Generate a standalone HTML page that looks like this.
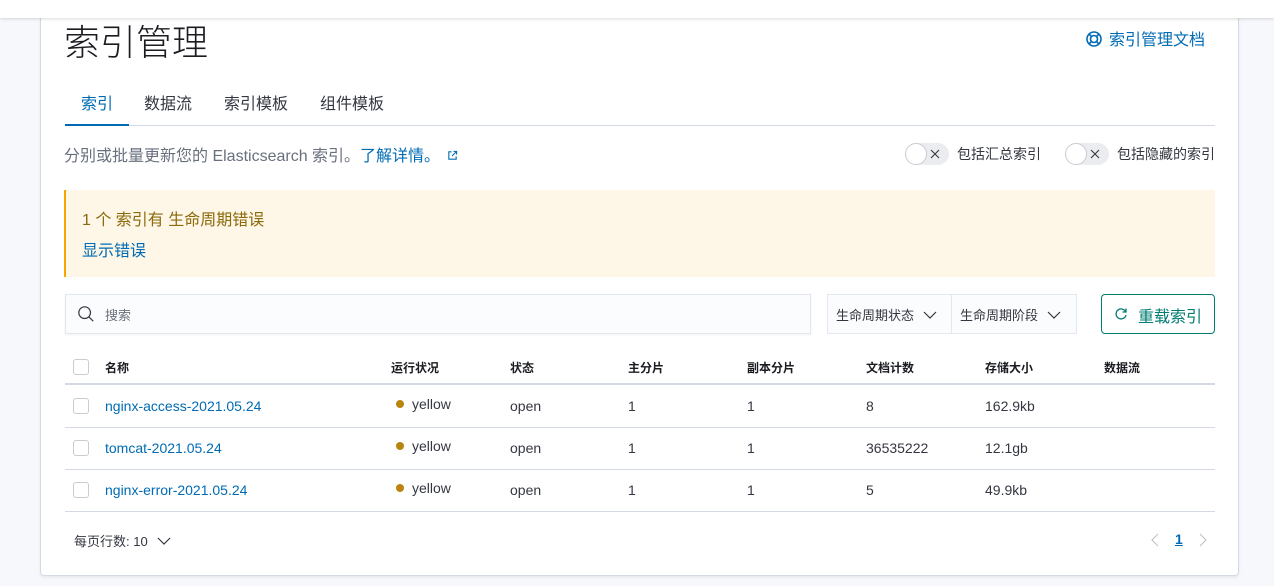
<!DOCTYPE html>
<html><head><meta charset="utf-8"><style>
*{box-sizing:border-box;margin:0;padding:0}
body{width:1274px;height:586px;overflow:hidden;background:#f7f8fc;font-family:"Liberation Sans","Noto Sans CJK SC",sans-serif;color:#343741;position:relative;font-size:14px}
.top{position:absolute;left:0;top:0;width:1274px;height:18px;background:#fff;box-shadow:0 1px 3px rgba(0,0,0,.15);z-index:2}
.panel{position:absolute;left:40px;top:-10px;width:1199px;height:586px;background:#fff;border:1px solid #d3dae6;border-radius:4px;box-shadow:0 2px 3px rgba(0,0,0,.06)}
.a{position:absolute;white-space:nowrap}
.blue{color:#006bb4 !important}
.tog{position:absolute;width:44px;height:22px;border-radius:11px;background:#eaecf0}
.tog i{position:absolute;left:0;top:0;width:22px;height:22px;border-radius:50%;background:#fff;border:1px solid #c9ccd3}
.tog svg{position:absolute;left:25px;top:6px}
.th{position:absolute;top:359px;font-size:12px;font-weight:bold;color:#1a1c21}
.cb{position:absolute;left:73px;width:16px;height:16px;border:1px solid #c9ccd3;border-radius:3px;background:#fff}
.hl{position:absolute;left:65px;width:1150px;height:1px;background:#d3dae6}
.td{position:absolute;font-size:14px;color:#343741}
.dot{display:inline-block;width:8px;height:8px;border-radius:50%;background:#b9850f;margin-right:8px;vertical-align:1px}
</style></head><body>
<div class="top"></div>
<div class="panel"></div>
<div class="a" style="left:64px;top:14px;font-size:36px;color:#1a1c21;font-weight:300">索引管理</div>
<div class="a blue" style="left:1085px;top:26px;font-size:16px"><svg width="18" height="18" viewBox="0 0 18 18" style="vertical-align:-3px;margin-right:6px"><circle cx="9" cy="9" r="7" fill="none" stroke="#006bb4" stroke-width="1.6"/><circle cx="9" cy="9" r="3.5" fill="none" stroke="#006bb4" stroke-width="1.6"/><path d="M4 4l2.5 2.5M14 4l-2.5 2.5M4 14l2.5-2.5M14 14l-2.5-2.5" stroke="#006bb4" stroke-width="1.6"/></svg>索引管理文档</div>
<div class="a blue" style="left:81px;top:90px;font-size:16px">索引</div>
<div class="a" style="left:144px;top:90px;font-size:16px">数据流</div>
<div class="a" style="left:224px;top:90px;font-size:16px">索引模板</div>
<div class="a" style="left:320px;top:90px;font-size:16px">组件模板</div>
<div style="position:absolute;left:65px;top:125px;width:1150px;height:1px;background:#d3dae6"></div>
<div style="position:absolute;left:65px;top:124px;width:64px;height:2px;background:#006bb4"></div>
<div class="a" style="left:64px;top:142px;color:#69707d;font-size:16px">分别或批量更新您的 Elasticsearch 索引。<span class="blue">了解详情。</span> <svg width="11" height="11" viewBox="0 0 12 12" style="margin-left:2px"><path d="M5 2H2v8h8V7M7 1.5h3.5V5M10.5 1.5L5.5 6.5" fill="none" stroke="#006bb4" stroke-width="1.2"/></svg></div>
<div class="tog" style="left:905px;top:143px"><i></i><svg width="10" height="10"><path d="M1 1l8 8M9 1L1 9" stroke="#343741" stroke-width="1.1"/></svg></div>
<div class="a" style="left:957px;top:144px">包括汇总索引</div>
<div class="tog" style="left:1065px;top:143px"><i></i><svg width="10" height="10"><path d="M1 1l8 8M9 1L1 9" stroke="#343741" stroke-width="1.1"/></svg></div>
<div class="a" style="left:1117px;top:144px">包括隐藏的索引</div>
<div style="position:absolute;left:64px;top:190px;width:1151px;height:87px;background:#fef6e6;border-left:2px solid #f5a700"></div>
<div class="a" style="left:82px;top:206px;font-size:16px;color:#8a6a0a">1 个 索引有 生命周期错误</div>
<div class="a blue" style="left:82px;top:237px;font-size:16px">显示错误</div>
<div style="position:absolute;left:65px;top:294px;width:746px;height:40px;background:#fbfcfd;border:1px solid #e3e8f0;box-shadow:0 1px 2px rgba(0,0,0,.06)"></div>
<svg style="position:absolute;left:77px;top:305px" width="18" height="18" viewBox="0 0 20 20"><circle cx="8.5" cy="8.5" r="6.5" fill="none" stroke="#343741" stroke-width="1.3"/><path d="M13 13l5 5" stroke="#343741" stroke-width="1.3"/></svg>
<div class="a" style="left:105px;top:305px;font-size:13px;color:#69707d">搜索</div>
<div style="position:absolute;left:827px;top:294px;width:250px;height:40px;background:#fbfcfd;border:1px solid #e3e8f0"></div>
<div style="position:absolute;left:951px;top:294px;width:1px;height:40px;background:#e3e8f0"></div>
<div class="a" style="left:836px;top:305px;font-size:13px">生命周期状态 <svg width="14" height="10" style="margin-left:5px"><path d="M1 2l6 6 6-6" fill="none" stroke="#343741" stroke-width="1.2"/></svg></div>
<div class="a" style="left:960px;top:305px;font-size:13px">生命周期阶段 <svg width="14" height="10" style="margin-left:5px"><path d="M1 2l6 6 6-6" fill="none" stroke="#343741" stroke-width="1.2"/></svg></div>
<div style="position:absolute;left:1101px;top:294px;width:114px;height:40px;border:1px solid #017d73;border-radius:4px"></div>
<svg style="position:absolute;left:1114px;top:307px" width="14" height="14" viewBox="0 0 14 14"><path d="M11.5 4.5A5 5 0 1 0 12 8" fill="none" stroke="#017d73" stroke-width="1.3"/><path d="M12 1.5v3.5H8.5" fill="none" stroke="#017d73" stroke-width="1.3"/></svg>
<div class="a" style="left:1138px;top:303px;font-size:16px;color:#017d73">重载索引</div>
<div class="cb" style="top:359px"></div>
<div class="th" style="left:105px">名称</div><div class="th" style="left:391px">运行状况</div><div class="th" style="left:510px">状态</div><div class="th" style="left:628px">主分片</div><div class="th" style="left:747px">副本分片</div><div class="th" style="left:866px">文档计数</div><div class="th" style="left:985px">存储大小</div><div class="th" style="left:1104px">数据流</div>
<div class="hl" style="top:383px;height:2px"></div>
<div class="cb" style="top:398px"></div>
<div class="td blue" style="left:105px;top:398px">nginx-access-2021.05.24</div><div class="td" style="left:396px;top:396px"><span class="dot"></span>yellow</div><div class="td" style="left:510px;top:398px">open</div><div class="td" style="left:628px;top:398px">1</div><div class="td" style="left:747px;top:398px">1</div><div class="td" style="left:866px;top:398px">8</div><div class="td" style="left:985px;top:398px">162.9kb</div>
<div class="hl" style="top:427px"></div>
<div class="cb" style="top:440px"></div>
<div class="td blue" style="left:105px;top:440px">tomcat-2021.05.24</div><div class="td" style="left:396px;top:438px"><span class="dot"></span>yellow</div><div class="td" style="left:510px;top:440px">open</div><div class="td" style="left:628px;top:440px">1</div><div class="td" style="left:747px;top:440px">1</div><div class="td" style="left:866px;top:440px">36535222</div><div class="td" style="left:985px;top:440px">12.1gb</div>
<div class="hl" style="top:469px"></div>
<div class="cb" style="top:482px"></div>
<div class="td blue" style="left:105px;top:482px">nginx-error-2021.05.24</div><div class="td" style="left:396px;top:480px"><span class="dot"></span>yellow</div><div class="td" style="left:510px;top:482px">open</div><div class="td" style="left:628px;top:482px">1</div><div class="td" style="left:747px;top:482px">1</div><div class="td" style="left:866px;top:482px">5</div><div class="td" style="left:985px;top:482px">49.9kb</div>
<div class="hl" style="top:511px"></div>
<div class="a" style="left:74px;top:531px;font-size:13px">每页行数: 10 <svg width="14" height="10" style="margin-left:6px"><path d="M1 2l6 6 6-6" fill="none" stroke="#343741" stroke-width="1.2"/></svg></div>
<svg style="position:absolute;left:1150px;top:533px" width="10" height="14"><path d="M8 1L2 7l6 6" fill="none" stroke="#c2c4c9" stroke-width="1.2"/></svg>
<div class="a blue" style="left:1175px;top:531px;font-size:14px;font-weight:bold;text-decoration:underline">1</div>
<svg style="position:absolute;left:1198px;top:533px" width="10" height="14"><path d="M2 1l6 6-6 6" fill="none" stroke="#c2c4c9" stroke-width="1.2"/></svg>
</body></html>
